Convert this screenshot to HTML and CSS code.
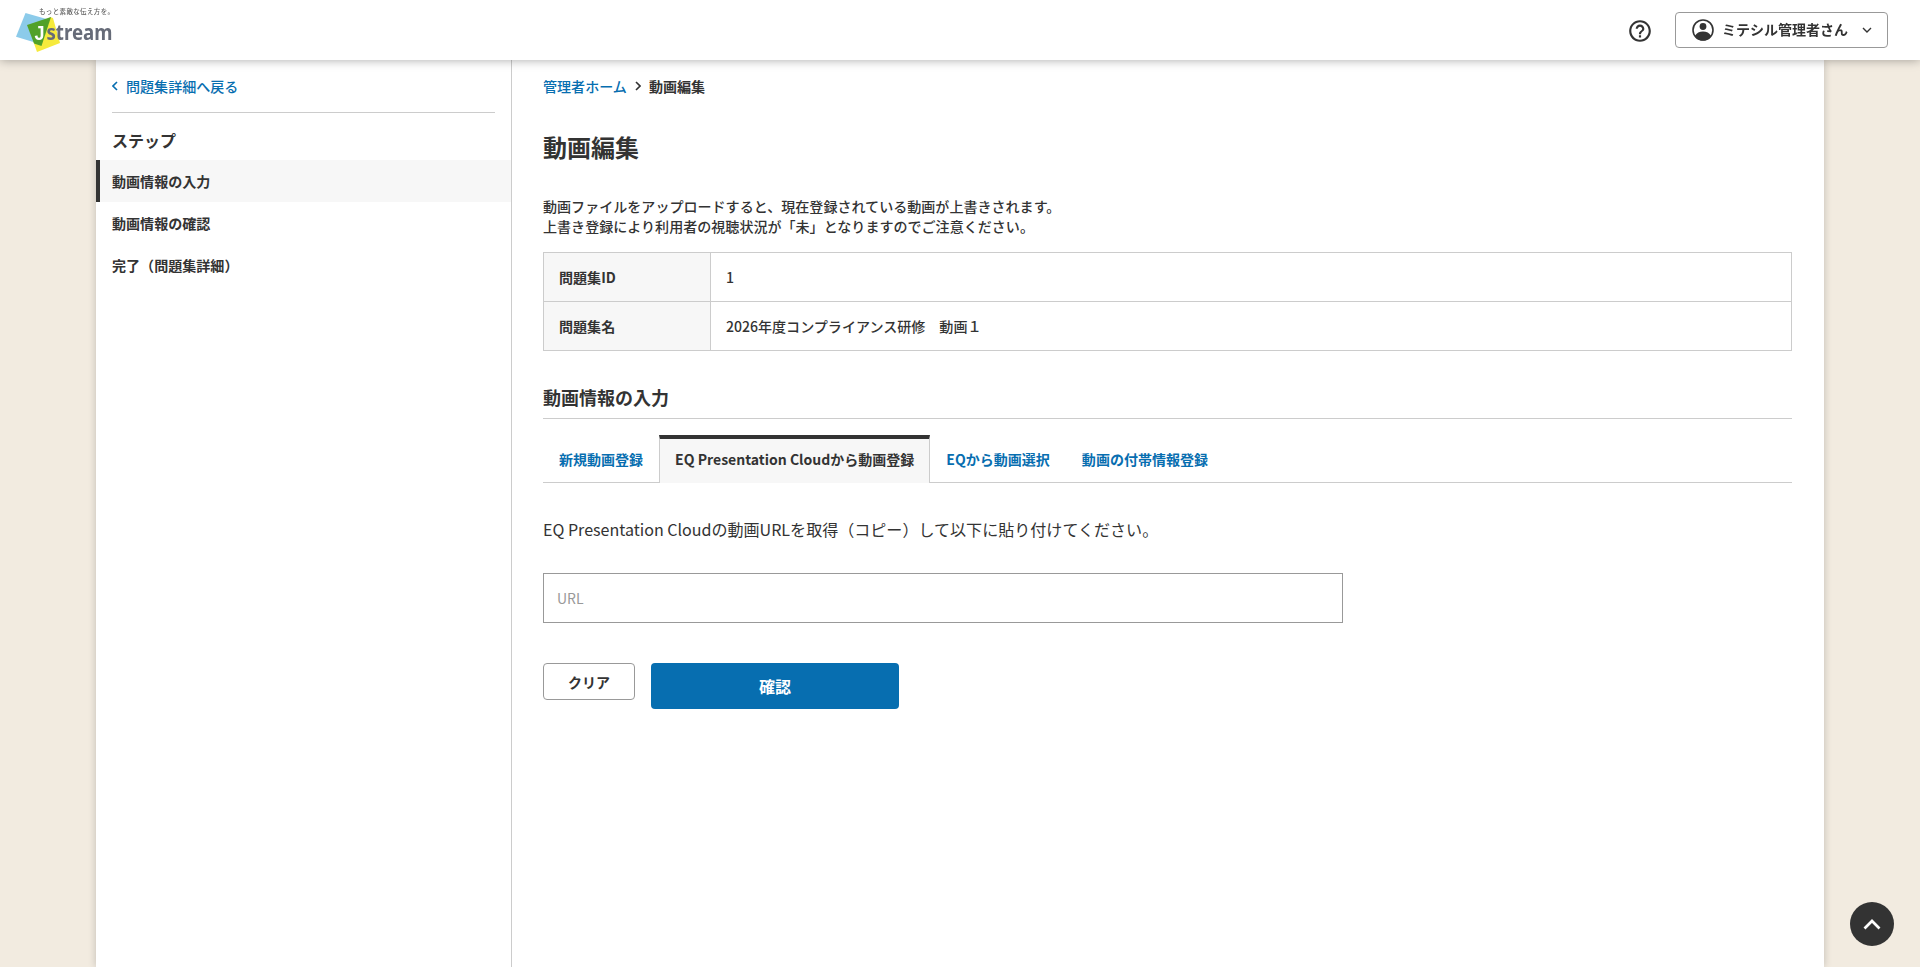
FILE: index.html
```html
<!DOCTYPE html>
<html lang="ja">
<head>
    <meta charset="UTF-8">
    <meta name="viewport" content="width=device-width, initial-scale=1.0">
    <title>動画編集</title>
    <link rel="stylesheet" href="styles.css">
</head>
<body>
    <header class="header">
        <a class="logo" href="#">
            <svg width="100" height="56" viewBox="0 0 100 56">
                <polygon points="9.500,13 34,20 24,44 0,36.700" fill="#8ccbea"/>
                <polygon points="34,17 37,18 44,43 21,52 17.500,42" fill="#f6ea3c"/>
                <polygon points="11,25 35,17 25.500,46 18,43.500" fill="#51a129"/>
                <text class="logo-copy" x="23" y="14" textLength="75">もっと素敵な伝え方を。</text>
                <text class="logo-j" x="18.500" y="39.500" textLength="10" lengthAdjust="spacingAndGlyphs">J</text>
                <text class="logo-name" x="30.500" y="39.500" textLength="66" lengthAdjust="spacingAndGlyphs">stream</text>
            </svg>
        </a>
        <div class="header-nav">
            <a class="help" href="#">
                <svg width="24" height="24" viewBox="0 0 24 24">
                    <path fill="#333" d="M11 18h2v-2h-2v2zm1-16C6.48 2 2 6.48 2 12s4.480 10 10 10 10-4.480 10-10S17.520 2 12 2zm0 18c-4.410 0-8-3.590-8-8s3.590-8 8-8 8 3.590 8 8-3.590 8-8 8zm0-14c-2.210 0-4 1.790-4 4h2c0-1.100.9-2 2-2s2 .9 2 2c0 2-3 1.750-3 5h2c0-2.250 3-2.500 3-5 0-2.210-1.790-4-4-4z"/>
                </svg>
            </a>
            <button class="user-btn" type="button">
                <svg width="22" height="22" viewBox="0 0 22 22">
                    <circle cx="11" cy="11" r="10" fill="#fff" stroke="#333" stroke-width="1.600"/>
                    <circle cx="11" cy="7.500" r="3.400" fill="#333"/>
                    <path fill="#333" d="M3 17c1.500-3.300 4.500-4.600 8-4.600s6.500 1.300 8 4.600c-2 3-4.800 4.500-8 4.500S5 20 3 17z"/>
                </svg>
                <span class="user-name">ミテシル管理者さん</span>
                <svg width="10" height="6" viewBox="0 0 10 6"><path class="stroke-thin" d="M1 1l4 4 4-4"/></svg>
            </button>
        </div>
    </header>

    <div class="container">
        <aside class="sidebar">
            <a class="back-link" href="#">
                <svg width="6" height="10" viewBox="0 0 6 10"><path class="stroke-link" d="M5 1L1 5l4 4"/></svg>
                <span>問題集詳細へ戻る</span>
            </a>
            <h2 class="step-title">ステップ</h2>
            <ul class="steps">
                <li class="step active">動画情報の入力</li>
                <li class="step">動画情報の確認</li>
                <li class="step">完了（問題集詳細）</li>
            </ul>
        </aside>

        <main class="main">
            <nav class="breadcrumb">
                <a href="#">管理者ホーム</a>
                <svg width="6" height="10" viewBox="0 0 6 10"><path class="stroke-dark" d="M1 1l4 4-4 4"/></svg>
                <span class="current">動画編集</span>
            </nav>

            <h1 class="page-title">動画編集</h1>

            <p class="note">動画ファイルをアップロードすると、現在登録されている動画が上書きされます。<br>上書き登録により利用者の視聴状況が「未」となりますのでご注意ください。</p>

            <table class="info-table">
                <tr>
                    <th>問題集ID</th>
                    <td>1</td>
                </tr>
                <tr>
                    <th>問題集名</th>
                    <td>2026年度コンプライアンス研修　動画１</td>
                </tr>
            </table>

            <h2 class="section-title">動画情報の入力</h2>

            <div class="tabs">
                <a class="tab" href="#">新規動画登録</a>
                <a class="tab active" href="#">EQ Presentation Cloudから動画登録</a>
                <a class="tab" href="#">EQから動画選択</a>
                <a class="tab" href="#">動画の付帯情報登録</a>
            </div>

            <p class="guide">EQ Presentation Cloudの動画URLを取得（コピー）して以下に貼り付けてください。</p>

            <form>
                <input class="url-input" type="text" placeholder="URL">
                <div class="actions">
                    <button class="btn-clear" type="reset">クリア</button>
                    <button class="btn-submit" type="button">確認</button>
                </div>
            </form>
        </main>
    </div>

    <a class="page-top" href="#">
        <svg width="18" height="11" viewBox="0 0 18 11"><path class="stroke-white" d="M1.500 9.500L9 2l7.500 7.500"/></svg>
    </a>
</body>
</html>
```

FILE: styles.css
```css
/* Reset and basic styles */
* {
    margin: 0;
    padding: 0;
    box-sizing: border-box;
}

body {
    height: 100vh;
    overflow: hidden;
    padding-top: 60px;
    font-family: "Noto Sans CJK JP", sans-serif;
    font-size: 14.06px;
    font-weight: 500;
    line-height: 20px;
    color: #333;
    background-color: #f2ebe0;
}

a {
    color: #076eb0;
    text-decoration: none;
}

ul {
    list-style: none;
}

svg {
    display: block;
    flex-shrink: 0;
}

button,
input {
    font-family: inherit;
    color: #333;
}

/* Icon strokes */
.stroke-thin,
.stroke-dark,
.stroke-link,
.stroke-white {
    fill: none;
    stroke: #333;
    stroke-width: 1.4;
}

.stroke-dark,
.stroke-link {
    stroke-width: 1.6;
}

.stroke-link {
    stroke: #076eb0;
}

.stroke-white {
    stroke: #fff;
    stroke-width: 2.7;
}

/* Header */
.header {
    position: fixed;
    top: 0;
    left: 0;
    z-index: 10;
    display: flex;
    justify-content: space-between;
    width: 100%;
    height: 60px;
    padding: 0 32px 0 16px;
    background-color: #fff;
    box-shadow: 0 0 10px rgba(0, 0, 0, 0.35);
}

.logo-copy {
    font-size: 6.5px;
    font-weight: 500;
    fill: #666;
}

.logo-j {
    font-family: "Liberation Sans", sans-serif;
    font-size: 20px;
    font-weight: 700;
    fill: #fff;
}

.logo-name {
    font-family: "Noto Sans", sans-serif;
    font-size: 21px;
    font-weight: 700;
    fill: #666b78;
}

.header-nav {
    display: flex;
    align-items: center;
    gap: 22px;
}

.help {
    padding-top: 2px;
}

.help svg {
    width: 26px;
    height: 26px;
}

.user-btn {
    display: flex;
    align-items: center;
    width: 213px;
    height: 36px;
    padding: 0 15px 0 16px;
    background-color: #fff;
    border: 1px solid #999;
    border-radius: 4px;
}

.user-name {
    margin: 0 auto 0 8px;
    padding-bottom: 2px;
    font-size: 14px;
    font-weight: 700;
    line-height: 20px;
    white-space: nowrap;
}

/* Layout */
.container {
    display: flex;
    width: 90%;
    height: 100%;
    margin: 0 auto;
    background-color: #fff;
    box-shadow: 0 0 8px rgba(0, 0, 0, 0.2);
}

.sidebar {
    width: 416px;
    border-right: 1px solid #ccc;
}

.main {
    flex: 1;
    padding: 16px 32px 0 31px;
}

/* Sidebar */
.back-link {
    display: flex;
    align-items: center;
    gap: 8px;
    height: 53px;
    margin: 0 16px;
    border-bottom: 1px solid #ccc;
}

.step-title {
    padding: 15px 16px 8px;
    font-size: 16px;
    line-height: 24px;
}

.step {
    padding: 11px 16px;
    font-weight: 700;
}

.step.active {
    padding-left: 12px;
    background-color: #f7f7f7;
    border-left: 4px solid #333;
}

/* Main contents */
.breadcrumb {
    display: flex;
    align-items: center;
    gap: 8px;
}

.current {
    font-weight: 700;
}

.page-title {
    margin-top: 33px;
    font-size: 24px;
    line-height: 36px;
}

.note {
    margin: 31px 0 16px;
}

.info-table {
    width: 100%;
    border-collapse: collapse;
}

.info-table th,
.info-table td {
    height: 49px;
    padding: 0 15px;
    text-align: left;
    border: 1px solid #ccc;
}

.info-table th {
    width: 167px;
    background-color: #f7f7f7;
}

.section-title {
    margin-top: 32px;
    padding-bottom: 6px;
    font-size: 18px;
    line-height: 29px;
    border-bottom: 1px solid #ccc;
}

/* Tabs */
.tabs {
    display: flex;
    height: 48px;
    margin-top: 16px;
    border-bottom: 1px solid #ccc;
}

.tab {
    height: 48px;
    padding: 14px 16px 0;
    font-size: 14.02px;
    font-weight: 700;
}

.tab.active {
    padding: 10px 15px 0;
    color: #333;
    background-color: #f7f7f7;
    border: 1px solid #ccc;
    border-top: 4px solid #333;
    border-bottom: none;
}

.guide {
    margin-top: 34px;
    font-size: 16.06px;
    font-weight: 400;
    line-height: 24px;
}

/* Form */
.url-input {
    display: block;
    width: 800px;
    height: 50px;
    margin-top: 32px;
    padding: 0 13px;
    font-size: 14px;
    border: 1px solid #999;
}

.url-input::placeholder {
    color: #999;
}

.actions {
    display: flex;
    align-items: flex-start;
    gap: 16px;
    margin-top: 40px;
}

.btn-clear {
    width: 92px;
    height: 37px;
    font-size: 14px;
    font-weight: 700;
    background-color: #fff;
    border: 1px solid #999;
    border-radius: 4px;
}

.btn-submit {
    width: 248px;
    height: 46px;
    font-size: 16px;
    font-weight: 700;
    color: #fff;
    background-color: #076eb0;
    border: none;
    border-radius: 4px;
}

/* Back to top */
.page-top {
    position: fixed;
    right: 26px;
    bottom: 21px;
    display: flex;
    align-items: center;
    justify-content: center;
    width: 44px;
    height: 44px;
    background-color: #333;
    border-radius: 50%;
}
```
